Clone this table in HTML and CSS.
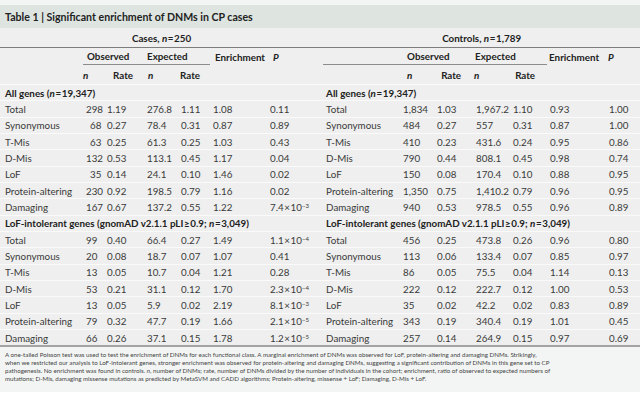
FILE: index.html
```html
<!DOCTYPE html>
<html>
<head>
<meta charset="utf-8">
<link rel="stylesheet" href="styles.css">
</head>
<body>
<div class="page">
  <div class="title">Table 1 | Significant enrichment of DNMs in CP cases</div>
  <table class="tbl">
    <colgroup>
      <col class="w83"><col class="w21"><col class="w40"><col class="w34"><col class="w32"><col class="w57"><col class="w56">
      <col class="w77"><col class="w34"><col class="w39"><col class="w37"><col class="w37"><col class="w59"><col class="w34">
    </colgroup>
    <thead>
      <tr class="hrow1">
        <th colspan="7">Cases, <i>n</i>&#8202;=&#8202;250</th>
        <th colspan="7">Controls, <i>n</i>&#8202;=&#8202;1,789</th>
      </tr>
      <tr class="hrow2">
        <th></th>
        <th colspan="2" class="grp obs-l">Observed</th>
        <th colspan="2" class="grp exp-l">Expected</th>
        <th class="enr-l">Enrichment</th>
        <th class="p-l"><i>P</i></th>
        <th class="grp lbl-r"></th>
        <th colspan="2" class="grp obs-r">Observed</th>
        <th colspan="2" class="grp exp-r">Expected</th>
        <th class="enr-r">Enrichment</th>
        <th class="p-r"><i>P</i></th>
      </tr>
      <tr class="hrow3">
        <th></th>
        <th class="nl"><i>n</i></th>
        <th class="rate rl">Rate</th>
        <th class="nl2"><i>n</i></th>
        <th class="rate rl2">Rate</th>
        <th></th><th></th><th></th>
        <th class="nr"><i>n</i></th>
        <th class="rate rr">Rate</th>
        <th class="nr2"><i>n</i></th>
        <th class="rate rr2">Rate</th>
        <th></th><th></th>
      </tr>
    </thead>
    <tbody>
      <tr class="sect">
        <th colspan="7" class="sl">All genes (<i>n</i>&#8202;=&#8202;19,347)</th>
        <th colspan="7" class="sr">All genes (<i>n</i>&#8202;=&#8202;19,347)</th>
      </tr>
      <tr>
        <td>Total</td><td>298</td><td>1.19</td><td>276.8</td><td>1.11</td><td>1.08</td><td>0.11</td>
        <td>Total</td><td>1,834</td><td>1.03</td><td>1,967.2</td><td>1.10</td><td>0.93</td><td>1.00</td>
      </tr>
      <tr>
        <td>Synonymous</td><td class="ind">68</td><td>0.27</td><td>78.4</td><td>0.31</td><td>0.87</td><td>0.89</td>
        <td>Synonymous</td><td>484</td><td>0.27</td><td>557</td><td>0.31</td><td>0.87</td><td>1.00</td>
      </tr>
      <tr>
        <td>T-Mis</td><td class="ind">63</td><td>0.25</td><td>61.3</td><td>0.25</td><td>1.03</td><td>0.43</td>
        <td>T-Mis</td><td>410</td><td>0.23</td><td>431.6</td><td>0.24</td><td>0.95</td><td>0.86</td>
      </tr>
      <tr>
        <td>D-Mis</td><td>132</td><td>0.53</td><td>113.1</td><td>0.45</td><td>1.17</td><td>0.04</td>
        <td>D-Mis</td><td>790</td><td>0.44</td><td>808.1</td><td>0.45</td><td>0.98</td><td>0.74</td>
      </tr>
      <tr>
        <td>LoF</td><td class="ind">35</td><td>0.14</td><td>24.1</td><td>0.10</td><td>1.46</td><td>0.02</td>
        <td>LoF</td><td>150</td><td>0.08</td><td>170.4</td><td>0.10</td><td>0.88</td><td>0.95</td>
      </tr>
      <tr>
        <td>Protein-altering</td><td>230</td><td>0.92</td><td>198.5</td><td>0.79</td><td>1.16</td><td>0.02</td>
        <td>Protein-altering</td><td>1,350</td><td>0.75</td><td>1,410.2</td><td>0.79</td><td>0.96</td><td>0.95</td>
      </tr>
      <tr>
        <td>Damaging</td><td>167</td><td>0.67</td><td>137.2</td><td>0.55</td><td>1.22</td><td>7.4&#8202;×&#8202;10<sup>−3</sup></td>
        <td>Damaging</td><td>940</td><td>0.53</td><td>978.5</td><td>0.55</td><td>0.96</td><td>0.89</td>
      </tr>
      <tr class="sect">
        <th colspan="7" class="sl">LoF-intolerant genes (gnomAD v2.1.1 pLI&#8202;≥&#8202;0.9; <i>n</i>&#8202;=&#8202;3,049)</th>
        <th colspan="7" class="sr">LoF-intolerant genes (gnomAD v2.1.1 pLI&#8202;≥&#8202;0.9; <i>n</i>&#8202;=&#8202;3,049)</th>
      </tr>
      <tr>
        <td>Total</td><td>99</td><td>0.40</td><td>66.4</td><td>0.27</td><td>1.49</td><td>1.1&#8202;×&#8202;10<sup>−4</sup></td>
        <td>Total</td><td>456</td><td>0.25</td><td>473.8</td><td>0.26</td><td>0.96</td><td>0.80</td>
      </tr>
      <tr>
        <td>Synonymous</td><td>20</td><td>0.08</td><td>18.7</td><td>0.07</td><td>1.07</td><td>0.41</td>
        <td>Synonymous</td><td>113</td><td>0.06</td><td>133.4</td><td>0.07</td><td>0.85</td><td>0.97</td>
      </tr>
      <tr>
        <td>T-Mis</td><td>13</td><td>0.05</td><td>10.7</td><td>0.04</td><td>1.21</td><td>0.28</td>
        <td>T-Mis</td><td>86</td><td>0.05</td><td>75.5</td><td>0.04</td><td>1.14</td><td>0.13</td>
      </tr>
      <tr>
        <td>D-Mis</td><td>53</td><td>0.21</td><td>31.1</td><td>0.12</td><td>1.70</td><td>2.3&#8202;×&#8202;10<sup>−4</sup></td>
        <td>D-Mis</td><td>222</td><td>0.12</td><td>222.7</td><td>0.12</td><td>1.00</td><td>0.53</td>
      </tr>
      <tr>
        <td>LoF</td><td>13</td><td>0.05</td><td>5.9</td><td>0.02</td><td>2.19</td><td>8.1&#8202;×&#8202;10<sup>−3</sup></td>
        <td>LoF</td><td>35</td><td>0.02</td><td>42.2</td><td>0.02</td><td>0.83</td><td>0.89</td>
      </tr>
      <tr>
        <td>Protein-altering</td><td>79</td><td>0.32</td><td>47.7</td><td>0.19</td><td>1.66</td><td>2.1&#8202;×&#8202;10<sup>−5</sup></td>
        <td>Protein-altering</td><td>343</td><td>0.19</td><td>340.4</td><td>0.19</td><td>1.01</td><td>0.45</td>
      </tr>
      <tr class="last">
        <td>Damaging</td><td>66</td><td>0.26</td><td>37.1</td><td>0.15</td><td>1.78</td><td>1.2&#8202;×&#8202;10<sup>−5</sup></td>
        <td>Damaging</td><td>257</td><td>0.14</td><td>264.9</td><td>0.15</td><td>0.97</td><td>0.69</td>
      </tr>
    </tbody>
  </table>
  <div class="note">A one-tailed Poisson test was used to test the enrichment of DNMs for each functional class. A marginal enrichment of DNMs was observed for LoF, protein-altering and damaging DNMs. Strikingly,<br>when we restricted our analysis to LoF-intolerant genes, stronger enrichment was observed for protein-altering and damaging DNMs, suggesting a significant contribution of DNMs in this gene set to CP<br>pathogenesis. No enrichment was found in controls. <i>n</i>, number of DNMs; rate, number of DNMs divided by the number of individuals in the cohort; enrichment, ratio of observed to expected numbers of<br>mutations; D-Mis, damaging missense mutations as predicted by MetaSVM and CADD algorithms; Protein-altering, missense + LoF; Damaging, D-Mis + LoF.</div>
</div>
</body>
</html>
```

FILE: styles.css
```css
html, body {
  margin: 0;
  padding: 0;
  background: #ffffff;
}

.page {
  width: 640px;
  height: 392px;
  padding-top: 5px;
  box-sizing: border-box;
  background: #f3f5f4;
  font-family: Lato, "Open Sans", sans-serif;
  color: #3a3a3a;
  display: flex;
  flex-direction: column;
  overflow: hidden;
}

.title {
  height: 23px;
  flex: none;
  background: #dee5e0;
  padding-left: 5px;
  display: flex;
  align-items: center;
  font-weight: 700;
  font-size: 10.6px;
  color: #222;
}

.tbl {
  flex: none;
  width: 640px;
  table-layout: fixed;
  border-collapse: separate;
  border-spacing: 0;
  background: #eeefee;
  font-size: 9.8px;
}

.w83 { width: 83px; }
.w21 { width: 21px; }
.w40 { width: 40px; }
.w34 { width: 34px; }
.w32 { width: 32px; }
.w57 { width: 57px; }
.w56 { width: 56px; }
.w77 { width: 77px; }
.w39 { width: 39px; }
.w37 { width: 37px; }
.w59 { width: 59px; }

.tbl th, .tbl td {
  padding: 0;
  white-space: nowrap;
  text-align: left;
  line-height: 12px;
  box-sizing: border-box;
  overflow: visible;
}

.tbl th {
  font-weight: 700;
  color: #222;
}

.hrow1 th {
  height: 20px;
  text-align: center;
  border-bottom: 1px solid #7d7d7d;
}

.hrow2 th {
  height: 17px;
}
.grp { border-bottom: 1px solid #8c8c8c; }
.obs-l { padding-left: 4px !important; }
.exp-l { padding-left: 3px !important; }
.enr-l { padding-left: 5px !important; }
.p-l { padding-left: 6px !important; }
.obs-r { padding-left: 7px !important; }
.exp-r { padding-left: 2px !important; }
.enr-r { padding-left: 2px !important; }
.p-r { padding-left: 2px !important; }

.hrow3 th {
  height: 19px;
}
.tbl .hrow3 .rate { text-align: right; }
.nl { padding-left: 0; }
.rl { padding-right: 11px !important; }
.nl2 { padding-left: 4px !important; }
.rl2 { padding-right: 10px !important; }
.nr { padding-left: 7px !important; }
.rr { padding-right: 12px !important; }
.nr2 { padding-left: 1px !important; }
.rr2 { padding-right: 12px !important; }

.tbl tbody th, .tbl tbody td {
  height: 16.33px;
  border-top: 1px solid #fafafa;
}

.tbl .sl { padding-left: 5px; }
.tbl .sr { padding-left: 3px; }

.tbl tbody td { padding-left: 3px; }
.tbl tbody td:nth-child(1) { padding-left: 5px; }
.tbl tbody td.ind { padding-left: 7px; }

.tbl tr.last td {
  height: 18.33px;
  border-bottom: 2px solid #a3a3a3;
}

sup {
  font-size: 6px;
  vertical-align: 3px;
  line-height: 0;
}

.note {
  padding: 4px 0 0 5px;
  font-size: 6.2px;
  line-height: 8px;
  color: #444;
  white-space: nowrap;
  overflow: hidden;
}
```
